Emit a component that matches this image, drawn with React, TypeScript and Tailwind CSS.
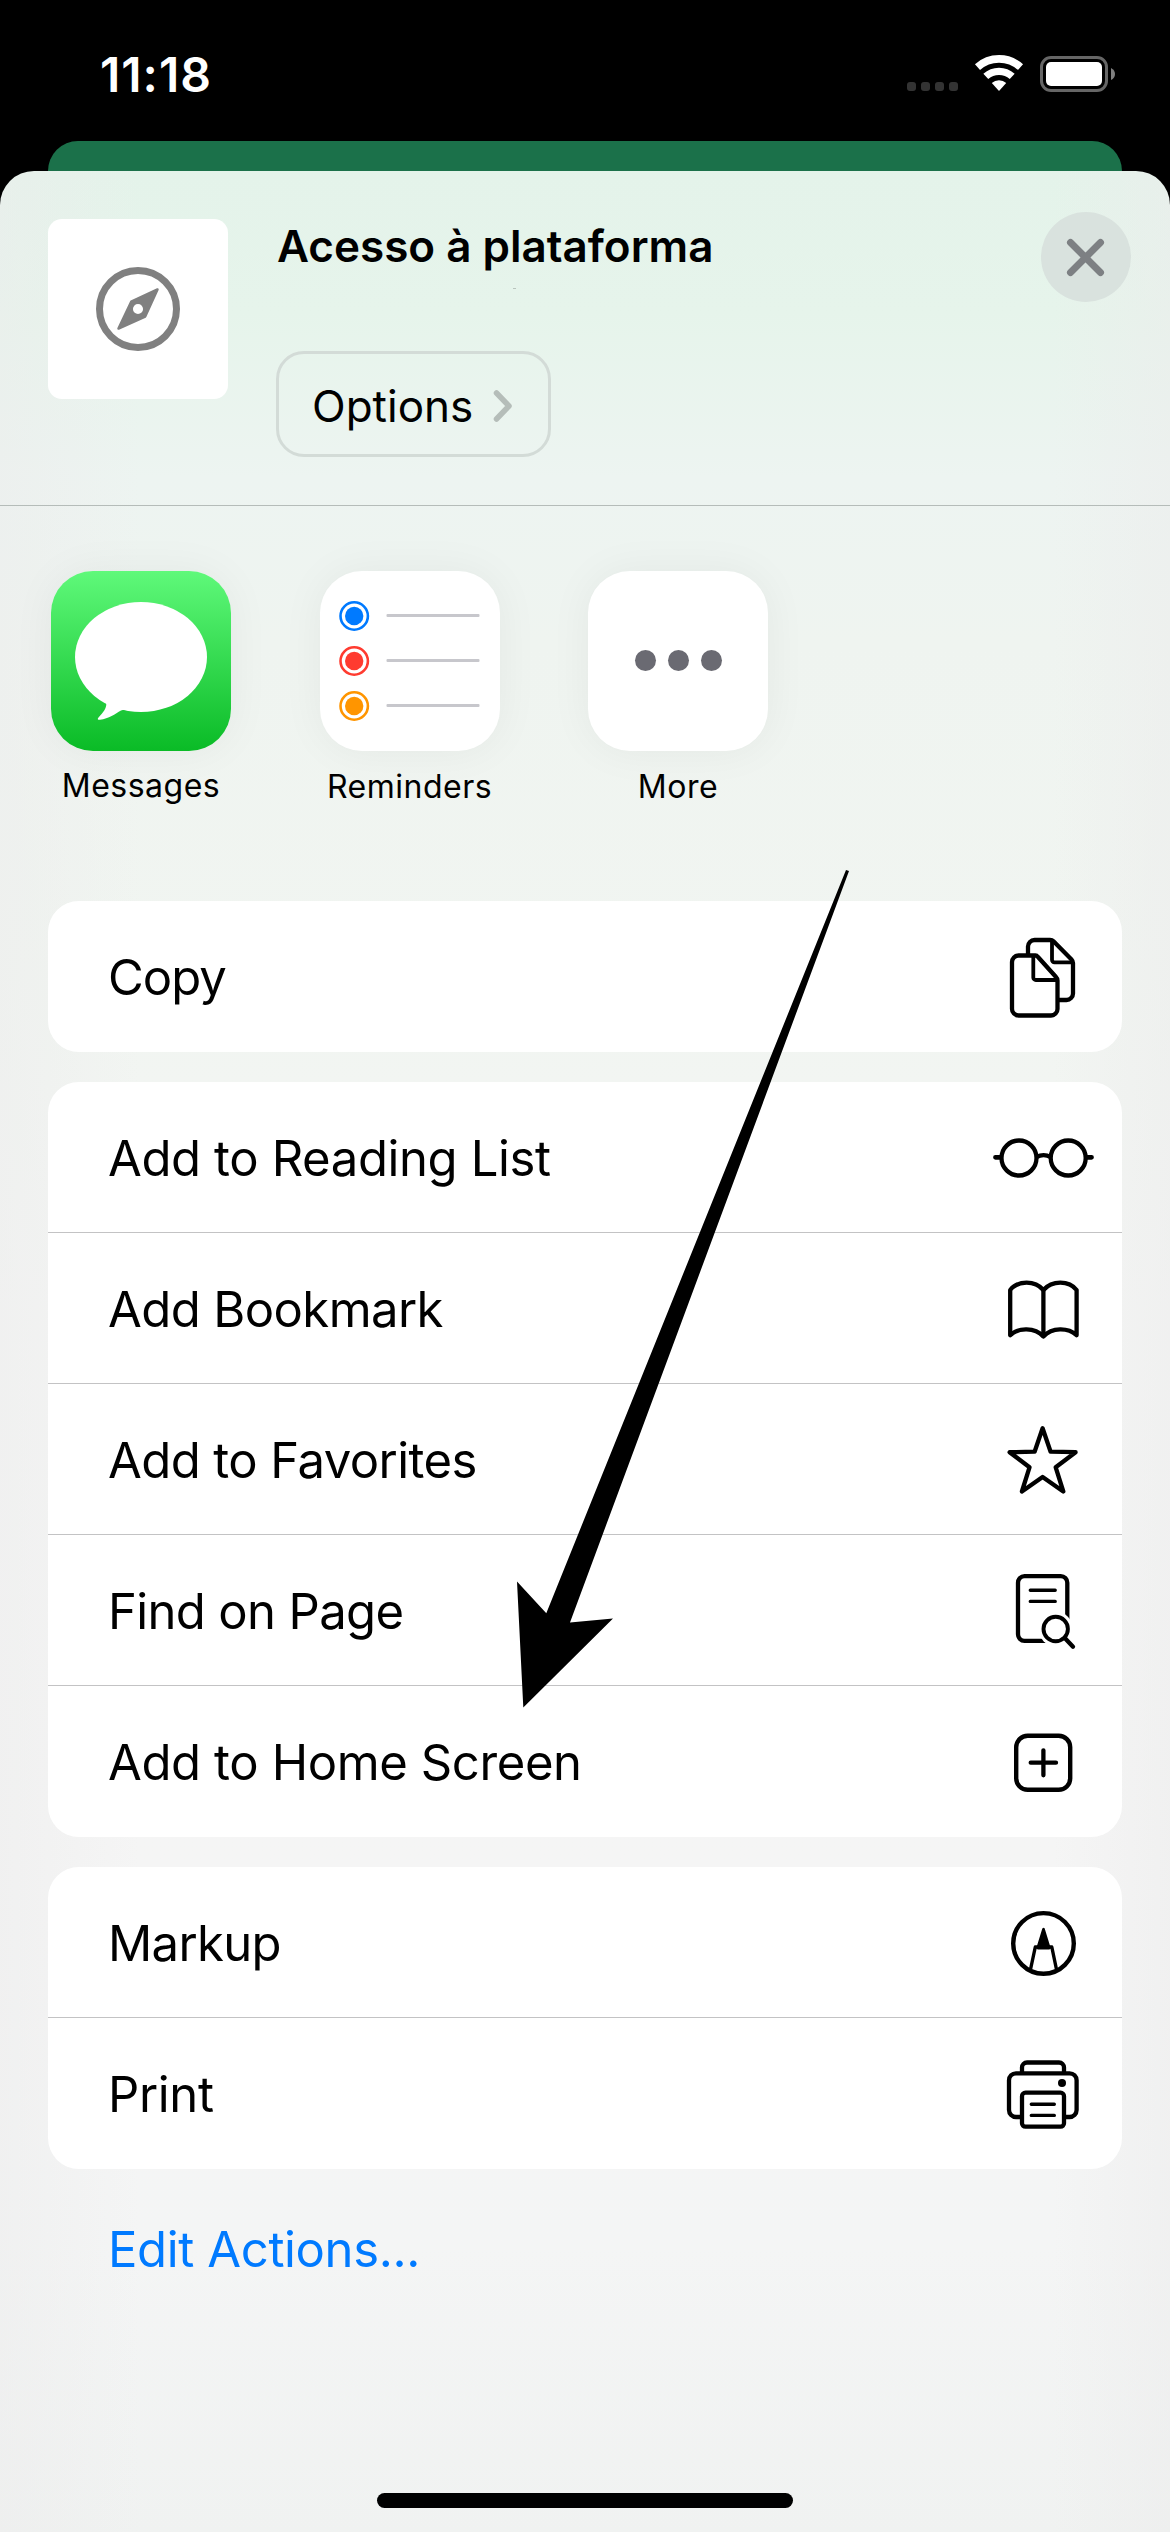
import type { ReactNode } from "react";

const stroke = {
  fill: "none",
  stroke: "#000",
  strokeLinecap: "round",
  strokeLinejoin: "round",
  strokeWidth: 4.3,
} as const;

function RowIcon({ children }: { children: ReactNode }) {
  return (
    <svg viewBox="0 0 108 151" className="h-[151px] w-[108px] shrink-0" {...stroke}>
      {children}
    </svg>
  );
}

const CopyIcon = () => (
  <RowIcon>
    <path d="M46.5 54.5H29.5A6.5 6.5 0 0 0 23 61V108A6.5 6.5 0 0 0 29.5 114.5H62A6.5 6.5 0 0 0 68.5 108V79.5C68.5 78 68 77 67 76L49 56C48.2 55 47.5 54.5 46.5 54.5Z" />
    <path d="M44.3 55V76.5A2.5 2.5 0 0 0 46.8 79H68" strokeWidth={3.8} />
    <path
      strokeLinecap="butt"
      d="M39 54V45.5A6.5 6.5 0 0 1 45.5 39H61C62.5 39 63.5 39.3 64.5 40.3L82.5 58.5C83.6 59.6 84 60.6 84 62V92.5A6.5 6.5 0 0 1 77.5 99H70"
    />
    <path d="M63 40V58.8A2.5 2.5 0 0 0 65.5 61.3H83" strokeWidth={3.8} />
  </RowIcon>
);

const GlassesIcon = () => (
  <RowIcon>
    <circle cx="30" cy="76" r="17.5" />
    <circle cx="79.2" cy="76" r="17.5" />
    <path strokeLinecap="butt" d="M47.5 75.2Q54.6 71.2 61.7 75.2" />
    <path strokeWidth={4.8} d="M6.5 75.3H11M98 75.3H102.5" />
  </RowIcon>
);

const BookIcon = () => (
  <RowIcon>
    <path d="M21.2 57C29 47.2 46 47.2 54.4 57C63 47.2 80 47.2 87.6 57V102.3C79 94.3 63 94.3 54.4 103.5C46 94.3 29 94.3 21.2 102.3Z" />
    <path d="M54.4 57V103" />
  </RowIcon>
);

const StarIcon = () => (
  <RowIcon>
    <path d="M53.6 44.2L61.6 67.7L86.6 68.2L66.7 83.3L74.3 107.5L53.6 93L32.9 107.5L40.5 83.3L20.6 68.2L45.6 67.7Z" />
  </RowIcon>
);

const FindIcon = () => (
  <RowIcon>
    <rect x="29" y="41.2" width="49.3" height="64.6" rx="6.5" />
    <path strokeWidth={3.4} d="M41.3 55.3H66.2M41.3 66.4H66.2" />
    <circle cx="66.7" cy="94" r="17.2" fill="#fff" stroke="none" />
    <path d="M76 103L84 112L90 100Z" fill="#fff" stroke="#fff" />
    <circle cx="66.7" cy="94" r="12.2" strokeWidth={3.9} />
    <path d="M76 103.3L84 111.8" strokeWidth={4.3} />
  </RowIcon>
);

const PlusSquareIcon = () => (
  <RowIcon>
    <rect x="27.2" y="49.8" width="54" height="54" rx="11.5" strokeWidth={4.4} />
    <path d="M54.4 64.3V89.3M41.7 76.7H67" />
  </RowIcon>
);

const MarkupIcon = () => (
  <RowIcon>
    <circle cx="54.5" cy="76.4" r="30.3" strokeWidth={4.4} />
    <path d="M41.6 102L46.3 80H62.8L67.4 102" strokeWidth={3.4} />
    <path d="M54.5 62.3L48.8 81H60.2Z" fill="#000" strokeWidth={2.8} />
  </RowIcon>
);

const PrintIcon = () => (
  <RowIcon>
    <path strokeLinecap="butt" d="M33 55V49.5A5 5 0 0 1 38 44.5H70A5 5 0 0 1 75 49.5V55" />
    <path
      strokeLinecap="butt"
      d="M33 99H27A7 7 0 0 1 20 92V62.3A7 7 0 0 1 27 55.3H80.6A7 7 0 0 1 87.6 62.3V92A7 7 0 0 1 80.6 99H75"
    />
    <rect x="33" y="74.7" width="42" height="34" rx="3.5" />
    <path strokeWidth={3.4} d="M42.3 86.2H65.3M42.3 97.4H65.3" />
    <circle cx="73" cy="65" r="4" fill="#000" stroke="none" />
  </RowIcon>
);

type Action = { label: string; tracking: string; icon: ReactNode };

const groups: Action[][] = [
  [{ label: "Copy", tracking: "tracking-[-1px]", icon: <CopyIcon /> }],
  [
    { label: "Add to Reading List", tracking: "tracking-[-0.38px]", icon: <GlassesIcon /> },
    { label: "Add Bookmark", tracking: "tracking-[-0.58px]", icon: <BookIcon /> },
    { label: "Add to Favorites", tracking: "tracking-[-0.57px]", icon: <StarIcon /> },
    { label: "Find on Page", tracking: "tracking-[-0.64px]", icon: <FindIcon /> },
    { label: "Add to Home Screen", tracking: "tracking-[-0.38px]", icon: <PlusSquareIcon /> },
  ],
  [
    { label: "Markup", tracking: "tracking-[-0.68px]", icon: <MarkupIcon /> },
    { label: "Print", tracking: "tracking-[-0.35px]", icon: <PrintIcon /> },
  ],
];

function StatusBar() {
  return (
    <div className="flex h-[141px] items-start justify-between pl-[100px] pr-[55px]">
      <div className="mt-[45px] text-[48px] font-semibold leading-[60px] tracking-[1px] text-white">11:18</div>
      <div className="mt-[55px] flex items-start">
        <div className="mt-[27px] flex gap-[5px]">
          {[0, 1, 2, 3].map((i) => (
            <div key={i} className="size-[9px] rounded-[3px] bg-[#333333]" />
          ))}
        </div>
        <svg viewBox="0 0 50 37" className="ml-[16px] h-[37px] w-[50px]" fill="none" stroke="#fff">
          <path d="M3.5 12.1A32.2 32.2 0 0 1 46.5 12.1" strokeWidth="7.6" />
          <path d="M11.8 21.4A19.7 19.7 0 0 1 38.2 21.4" strokeWidth="7.3" />
          <path d="M25 36L17.8 28A10.7 10.7 0 0 1 32.2 28Z" fill="#fff" stroke="none" />
        </svg>
        <div className="ml-[16px] flex items-center">
          <div className="mt-[1px] h-[36px] w-[68px] rounded-[11px] border-[3px] border-[#666666] p-[3px]">
            <div className="h-full w-full rounded-[5px] bg-white" />
          </div>
          <svg viewBox="0 0 4 12" className="ml-[3px] h-[12px] w-[4px]">
            <path d="M0 0Q4 2 4 6T0 12Z" fill="#7f7f7f" />
          </svg>
        </div>
      </div>
    </div>
  );
}

function Header() {
  return (
    <div className="relative flex h-[335px] border-b border-[#b5bcb9] pl-[48px] pr-[39px]">
      <div className="mt-[48px] size-[180px] rounded-[14px] bg-white">
        <svg viewBox="0 0 180 180" className="size-[180px]">
          <circle cx="90" cy="90" r="38.5" fill="none" stroke="#808080" strokeWidth="7" />
          <path
            fillRule="evenodd"
            fill="#808080"
            stroke="#808080"
            strokeWidth="2.5"
            strokeLinejoin="round"
            d="M109.500 70.500L83.200 82.700L70.500 109.500L97.200 97.500ZM90 83.700A6.300 6.300 0 1 1 90 96.300A6.300 6.300 0 1 1 90 83.700Z"
          />
        </svg>
      </div>
      <div className="ml-[48px] flex-1">
        <div className="ml-[1px] mt-[45px] text-[44px] font-semibold leading-[60px]">Acesso à plataforma</div>
        <button className="mt-[75px] flex h-[106px] w-[275px] items-center rounded-[28px] border-[3px] border-[#d3dbd7] pl-[33px] pt-[4px] text-[44px] leading-[60px]">
          Options
          <svg
            viewBox="0 0 20 34"
            className="-mt-[1px] ml-[20px] h-[34px] w-[20px]"
            fill="none"
            stroke="#b5bdb9"
            strokeWidth="5.5"
            strokeLinecap="round"
            strokeLinejoin="round"
          >
            <path d="M3.500 4L16 17L3.500 30" />
          </svg>
        </button>
      </div>
      <button aria-label="Close" className="mt-[41px] flex size-[90px] items-center justify-center rounded-full bg-[#d9e2de]">
        <svg viewBox="0 0 90 90" className="size-[90px]" stroke="#7d8083" strokeWidth="7" strokeLinecap="round">
          <path d="M29.500 30.500L59.500 60.500M59.500 30.500L29.500 60.500" />
        </svg>
      </button>
      <div className="absolute left-[513px] top-[117px] h-px w-[3px] bg-[#b9c4bd]" />
    </div>
  );
}

function MessagesTile() {
  return (
    <svg viewBox="0 0 180 180" className="size-[180px]" fill="#fff">
      <ellipse cx="90" cy="86" rx="66" ry="55" />
      <path d="M50 124C57 131 58 136 47.500 146.500C46 148.500 47 149 49 148.800C58 147.500 64 143 70 139.500C74 138.500 76 139.500 80 140L90 120Z" />
    </svg>
  );
}

function RemindersTile() {
  return (
    <svg viewBox="0 0 180 180" className="size-[180px]">
      {["#007aff", "#ff3b30", "#ff9500"].map((c, i) => (
        <g key={c} transform={`translate(0 ${45 + i * 45})`}>
          <circle cx="34.2" cy="0" r="13.700" fill="none" stroke={c} strokeWidth="2.6" />
          <circle cx="34.2" cy="0" r="9.200" fill={c} />
          <rect x="66.500" y="-2" width="93" height="3" rx="1" fill="#c7c7cc" />
        </g>
      ))}
    </svg>
  );
}

function MoreTile() {
  return (
    <svg viewBox="0 0 180 180" className="size-[180px]" fill="#6a6a72">
      <circle cx="57.500" cy="89.500" r="10.500" />
      <circle cx="90.500" cy="89.500" r="10.500" />
      <circle cx="123.500" cy="89.500" r="10.500" />
    </svg>
  );
}

const apps = [
  { name: "Messages", tile: <MessagesTile />, bg: "bg-[linear-gradient(180deg,#5ff97a_0%,#0abb26_100%)]", pad: "mt-[17px]" },
  { name: "Reminders", tile: <RemindersTile />, bg: "bg-white", pad: "mt-[18px]" },
  { name: "More", tile: <MoreTile />, bg: "bg-white", pad: "mt-[18px]" },
];

function AppRow() {
  return (
    <div className="flex h-[330px] gap-[88.5px] pl-[51px] pt-[65px]">
      {apps.map((a) => (
        <div key={a.name} className="flex w-[180px] flex-col items-center">
          <div className={`size-[180px] overflow-hidden rounded-[42px] shadow-[0_0_44px_rgba(0,0,0,0.05)] ${a.bg}`}>{a.tile}</div>
          <div className={`${a.pad} text-[32px] leading-[36px] tracking-[0.5px]`}>{a.name}</div>
        </div>
      ))}
    </div>
  );
}

function ActionGroup({ actions }: { actions: Action[] }) {
  return (
    <div className="overflow-hidden rounded-[31px] bg-white">
      {actions.map((a, i) => (
        <div
          key={a.label}
          className={`flex h-[151px] items-center justify-between pl-[60px] pr-[25px] ${
            i < actions.length - 1 ? "shadow-[inset_0_-1px_0_#c3c3c4]" : ""
          }`}
        >
          <span className={`pt-[2px] text-[49px] leading-[60px] ${a.tracking}`}>{a.label}</span>
          {a.icon}
        </div>
      ))}
    </div>
  );
}

export default function App() {
  return (
    <div className="relative h-[2532px] w-[1170px] overflow-hidden bg-black font-['Inter',sans-serif] text-black">
      <StatusBar />
      <div className="mx-[48px] h-[30px] rounded-t-[30px] bg-[#1b714a]" />
      <div className="h-[2361px] rounded-t-[34px] bg-[linear-gradient(90deg,rgba(236,236,236,0.5)_0%,rgba(240,240,240,0)_12%,rgba(240,240,240,0)_90%,rgba(236,236,236,0.5)_100%),linear-gradient(180deg,#e4f3ea_0%,#e6f4eb_6%,#edf4f1_13%,#eff4f0_20%,#f1f5f1_34%,#f4f5f4_48%,#f5f5f5_72%,#f4f5f5_88%,#f0f2f1_100%)]">
        <Header />
        <AppRow />
        <div className="mt-[65px] flex flex-col gap-[30px] px-[48px]">
          {groups.map((g) => (
            <ActionGroup key={g[0].label} actions={g} />
          ))}
        </div>
        <div className="mt-[51px] pl-[108px] text-[49px] leading-[60px] tracking-[-0.36px] text-[#007aff]">Edit Actions...</div>
        <div className="mx-auto mt-[213px] h-[15px] w-[416px] rounded-full bg-black" />
      </div>
      <svg viewBox="0 0 332 838" className="pointer-events-none absolute left-[517px] top-[870px] h-[838px] w-[332px]">
        <path d="M329 0L332 1L53 752.4L96 748.4L6.3 837.4L0 711.6L29.3 743.2Z" />
      </svg>
    </div>
  );
}
